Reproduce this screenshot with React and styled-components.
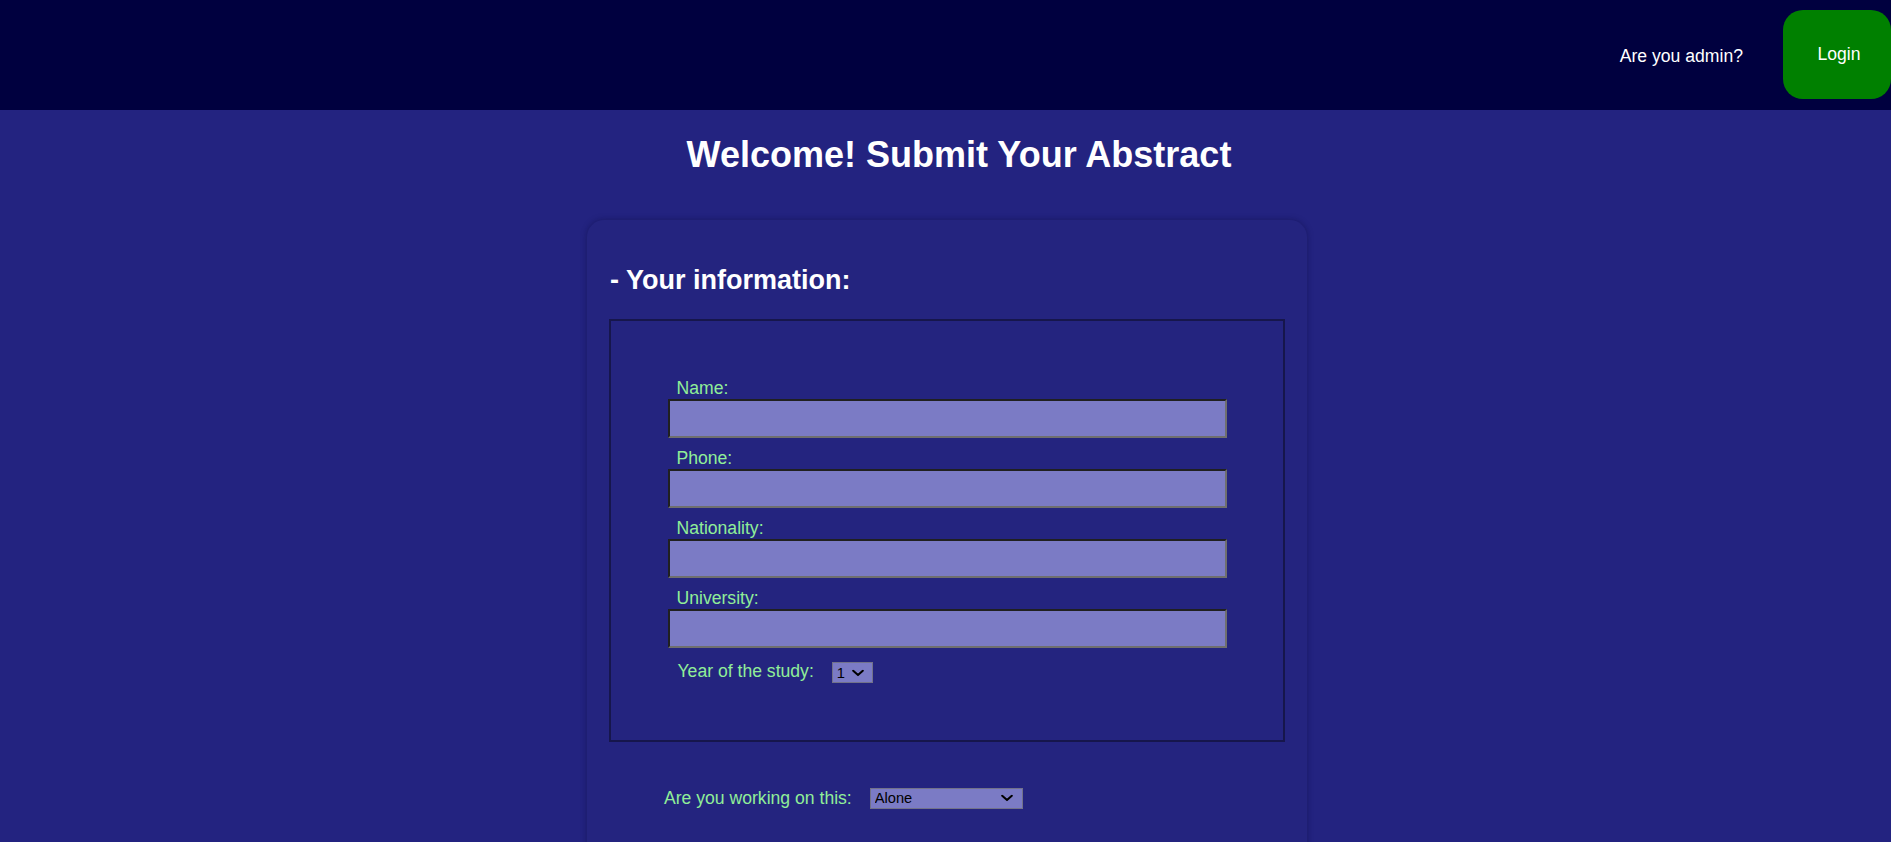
import React from "react";
import styled, { createGlobalStyle } from "styled-components";

const GlobalStyle = createGlobalStyle`
  html {
    overflow: hidden;
  }
  body {
    margin: 0;
    background: #232380;
    font-family: "Liberation Sans", Arial, sans-serif;
    font-size: 17.6px;
    color: #ffffff;
  }
  * {
    box-sizing: border-box;
  }
`;

const Header = styled.header`
  height: 110px;
  background: #00003f;
  display: flex;
  align-items: center;
  justify-content: flex-end;
  gap: 40px;
`;

const AdminText = styled.span`
  color: #ffffff;
  font-size: 17.6px;
  line-height: 20px;
  margin-top: 1px;
`;

const LoginButton = styled.button`
  width: 108px;
  height: 89px;
  margin-top: -1px;
  border: none;
  border-radius: 20px;
  background: #008000;
  color: #ffffff;
  font-family: "Liberation Sans", Arial, sans-serif;
  font-size: 17.6px;
  padding: 0 0 0 4px;
  cursor: pointer;
`;

const Main = styled.main`
  display: flex;
  flex-direction: column;
  align-items: center;
`;

const Title = styled.h1`
  margin: 24.5px 0 0;
  padding-left: 27px;
  font-size: 36px;
  line-height: 40.4px;
  font-weight: bold;
  color: #ffffff;
`;

const Card = styled.section`
  width: 720px;
  margin-top: 45px;
  margin-left: 3px;
  padding: 22px 22px 140px;
  border-radius: 17px;
  background: #24247f;
  box-shadow: 0 0 6px rgba(10, 10, 60, 0.45);
`;

const SectionTitle = styled.h2`
  margin: 22.8px 0 24.2px;
  padding-left: 1px;
  font-size: 27px;
  line-height: 30px;
  font-weight: bold;
  color: #ffffff;
`;

const Fieldset = styled.fieldset`
  margin: 0;
  padding: 57.5px 0 57.5px;
  border: 2px solid #16164c;
`;

const FieldGroup = styled.div`
  width: 559px;
  margin: 0 auto;
  display: flex;
  flex-direction: column;
`;

const Label = styled.label`
  display: block;
  padding-left: 9px;
  color: #90ee98;
  font-size: 17.6px;
  line-height: 20px;
  margin-bottom: 1px;
`;

const TextInput = styled.input`
  width: 100%;
  height: 38.6px;
  margin: 0 0 10.4px;
  padding: 0 6px;
  background: #7b7bc5;
  border: 2px solid;
  border-color: #202020 #6f6f6f #6f6f6f #202020;
  font-family: "Liberation Sans", Arial, sans-serif;
  font-size: 17.6px;
  color: #000;
  outline: none;
`;

const InlineRow = styled.div`
  display: flex;
  align-items: flex-start;
  gap: ${(p) => p.$gap}px;
  padding-left: ${(p) => p.$indent || 0}px;
  margin-top: ${(p) => p.$top || 0}px;
`;

const InlineLabel = styled.label`
  color: #90ee98;
  font-size: 17.6px;
  line-height: 20px;
  margin-top: ${(p) => p.$shift || 0}px;
  padding-left: ${(p) => p.$pad || 0}px;
`;

const SelectWrap = styled.span`
  position: relative;
  display: inline-flex;
  width: ${(p) => p.$w}px;
  height: 20.4px;
`;

const Select = styled.select`
  appearance: none;
  -webkit-appearance: none;
  width: 100%;
  height: 100%;
  margin: 0;
  padding: 0 0 0 4px;
  background-color: #7b7bc5;
  border: 1px solid #72728a;
  border-radius: 0;
  color: #000;
  font-family: "Liberation Sans", Arial, sans-serif;
  font-size: 14.67px;
  line-height: 18px;
  outline: none;
`;

const Chevron = styled.svg`
  position: absolute;
  right: ${(p) => p.$right}px;
  top: 50%;
  width: 12px;
  height: 7px;
  transform: translateY(-50%);
  pointer-events: none;
`;

const fields = ["Name:", "Phone:", "Nationality:", "University:"];

function DropDown({ width, right, defaultValue, children }) {
  return (
    <SelectWrap $w={width}>
      <Select defaultValue={defaultValue}>{children}</Select>
      <Chevron $right={right} viewBox="0 0 12 7">
        <path
          d="M1.2 1.2 L6 5.6 L10.8 1.2"
          fill="none"
          stroke="#000"
          strokeWidth="2"
          strokeLinecap="round"
          strokeLinejoin="round"
        />
      </Chevron>
    </SelectWrap>
  );
}

export default function App() {
  return (
    <>
      <GlobalStyle />
      <Header>
        <AdminText>Are you admin?</AdminText>
        <LoginButton>Login</LoginButton>
      </Header>
      <Main>
        <Title>Welcome! Submit Your Abstract</Title>
        <Card>
          <SectionTitle>- Your information:</SectionTitle>
          <Fieldset>
            <FieldGroup>
              {fields.map((f) => (
                <React.Fragment key={f}>
                  <Label>{f}</Label>
                  <TextInput type="text" />
                </React.Fragment>
              ))}
              <InlineRow $top={4} $gap={18}>
                <InlineLabel $shift={-1} $pad={10}>
                  Year of the study:
                </InlineLabel>
                <DropDown width={41} right={9} defaultValue="1">
                  <option value="1">1</option>
                  <option value="2">2</option>
                  <option value="3">3</option>
                  <option value="4">4</option>
                  <option value="5">5</option>
                  <option value="6">6</option>
                </DropDown>
              </InlineRow>
            </FieldGroup>
          </Fieldset>
          <InlineRow $top={46} $indent={55} $gap={18}>
            <InlineLabel>Are you working on this:</InlineLabel>
            <DropDown width={153} right={10} defaultValue="alone">
              <option value="alone">Alone</option>
              <option value="team">With a team</option>
            </DropDown>
          </InlineRow>
        </Card>
      </Main>
    </>
  );
}
